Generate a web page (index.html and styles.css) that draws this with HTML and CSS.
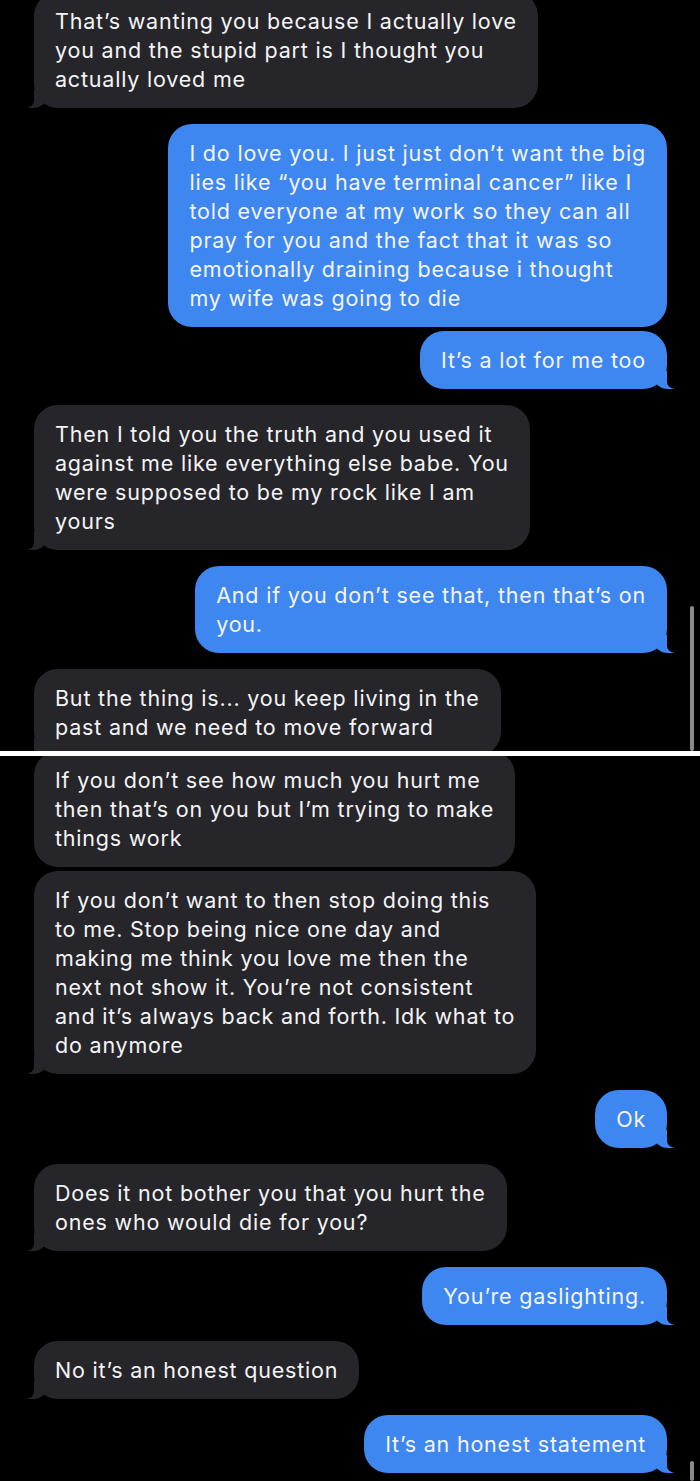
FILE: index.html
```html
<!DOCTYPE html>
<html>
<head>
    <meta name="viewport" content="width=device-width, initial-scale=1.0">
    <title>Messages</title>
    <link rel="stylesheet" href="styles.css">
</head>
<body>

    <!-- first screenshot -->
    <div class="shot shot-top">
        <div class="thread">
            <div class="msg in first-top"><div class="bubble">That’s wanting you because I actually love<br>you and the stupid part is I thought you<br>actually loved me</div></div>
            <div class="msg out gap-l"><div class="bubble no-tail">I do love you. I just just don’t want the big<br>lies like “you have terminal cancer” like I<br>told everyone at my work so they can all<br>pray for you and the fact that it was so<br>emotionally draining because i thought<br>my wife was going to die</div></div>
            <div class="msg out gap-s"><div class="bubble">It’s a lot for me too</div></div>
            <div class="msg in gap-l"><div class="bubble">Then I told you the truth and you used it<br>against me like everything else babe. You<br>were supposed to be my rock like I am<br>yours</div></div>
            <div class="msg out gap-l"><div class="bubble">And if you don’t see that, then that’s on<br>you.</div></div>
            <div class="msg in gap-l"><div class="bubble">But the thing is... you keep living in the<br>past and we need to move forward</div></div>
        </div>
        <div class="scrollbar bar-top"></div>
    </div>

    <div class="divider"></div>

    <!-- second screenshot -->
    <div class="shot shot-bottom">
        <div class="thread">
            <div class="msg in first-bottom"><div class="bubble no-tail">If you don’t see how much you hurt me<br>then that’s on you but I’m trying to make<br>things work</div></div>
            <div class="msg in gap-s"><div class="bubble">If you don’t want to then stop doing this<br>to me. Stop being nice one day and<br>making me think you love me then the<br>next not show it. You’re not consistent<br>and it’s always back and forth. Idk what to<br>do anymore</div></div>
            <div class="msg out gap-l"><div class="bubble">Ok</div></div>
            <div class="msg in gap-l"><div class="bubble">Does it not bother you that you hurt the<br>ones who would die for you?</div></div>
            <div class="msg out gap-l"><div class="bubble">You’re gaslighting.</div></div>
            <div class="msg in gap-l"><div class="bubble">No it’s an honest question</div></div>
            <div class="msg out gap-l"><div class="bubble">It’s an honest statement</div></div>
        </div>
        <div class="scrollbar bar-bottom"></div>
    </div>

</body>
</html>
```

FILE: styles.css
```css
* {
    margin: 0;
    padding: 0;
    box-sizing: border-box;
}
body {
    background: #000;
    font-family: Inter, "Noto Sans", sans-serif;
    color: #f4f4f6;
}
.shot {
    position: relative;
    overflow: hidden;
    background: #000;
}
.shot-top {
    height: 751px;
}
.shot-bottom {
    height: 725px;
}
.divider {
    height: 5px;
    background: #fff;
}
.thread {
    display: flex;
    flex-direction: column;
    padding: 0 33px 0 34px;
}
.first-top {
    margin-top: -8px;
}
.first-bottom {
    margin-top: -5px;
}
.gap-s {
    margin-top: 4px;
}
.gap-l {
    margin-top: 16px;
}
.msg {
    display: flex;
}
.msg.out {
    justify-content: flex-end;
}
.bubble {
    position: relative;
    white-space: nowrap;
    font-size: 21.5px;
    font-weight: 400;
    line-height: 29px;
    letter-spacing: 0.8px;
    padding: 14.5px 21px;
    border-radius: 24px;
}
.in .bubble {
    background: #262529;
}
.out .bubble {
    background: #3e87f1;
}

/* bubble tails */
.bubble::before,
.bubble::after {
    content: "";
    position: absolute;
    bottom: 0;
    height: 18px;
}
.in .bubble::before {
    left: -7px;
    width: 20px;
    background: #262529;
    border-bottom-right-radius: 14px 12px;
}
.in .bubble::after {
    left: -10px;
    width: 10px;
    background: #000;
    border-bottom-right-radius: 9px 7px;
}
.out .bubble::before {
    right: -7px;
    width: 20px;
    background: #3e87f1;
    border-bottom-left-radius: 14px 12px;
}
.out .bubble::after {
    right: -10px;
    width: 10px;
    background: #000;
    border-bottom-left-radius: 9px 7px;
}
.bubble.no-tail::before,
.bubble.no-tail::after {
    display: none;
}

.scrollbar {
    position: absolute;
    right: 6px;
    width: 4px;
    border-radius: 2px;
    background: #8a8a8c;
}
.bar-top {
    top: 606px;
    bottom: 0;
}
.bar-bottom {
    bottom: 0;
    height: 20px;
}
```
